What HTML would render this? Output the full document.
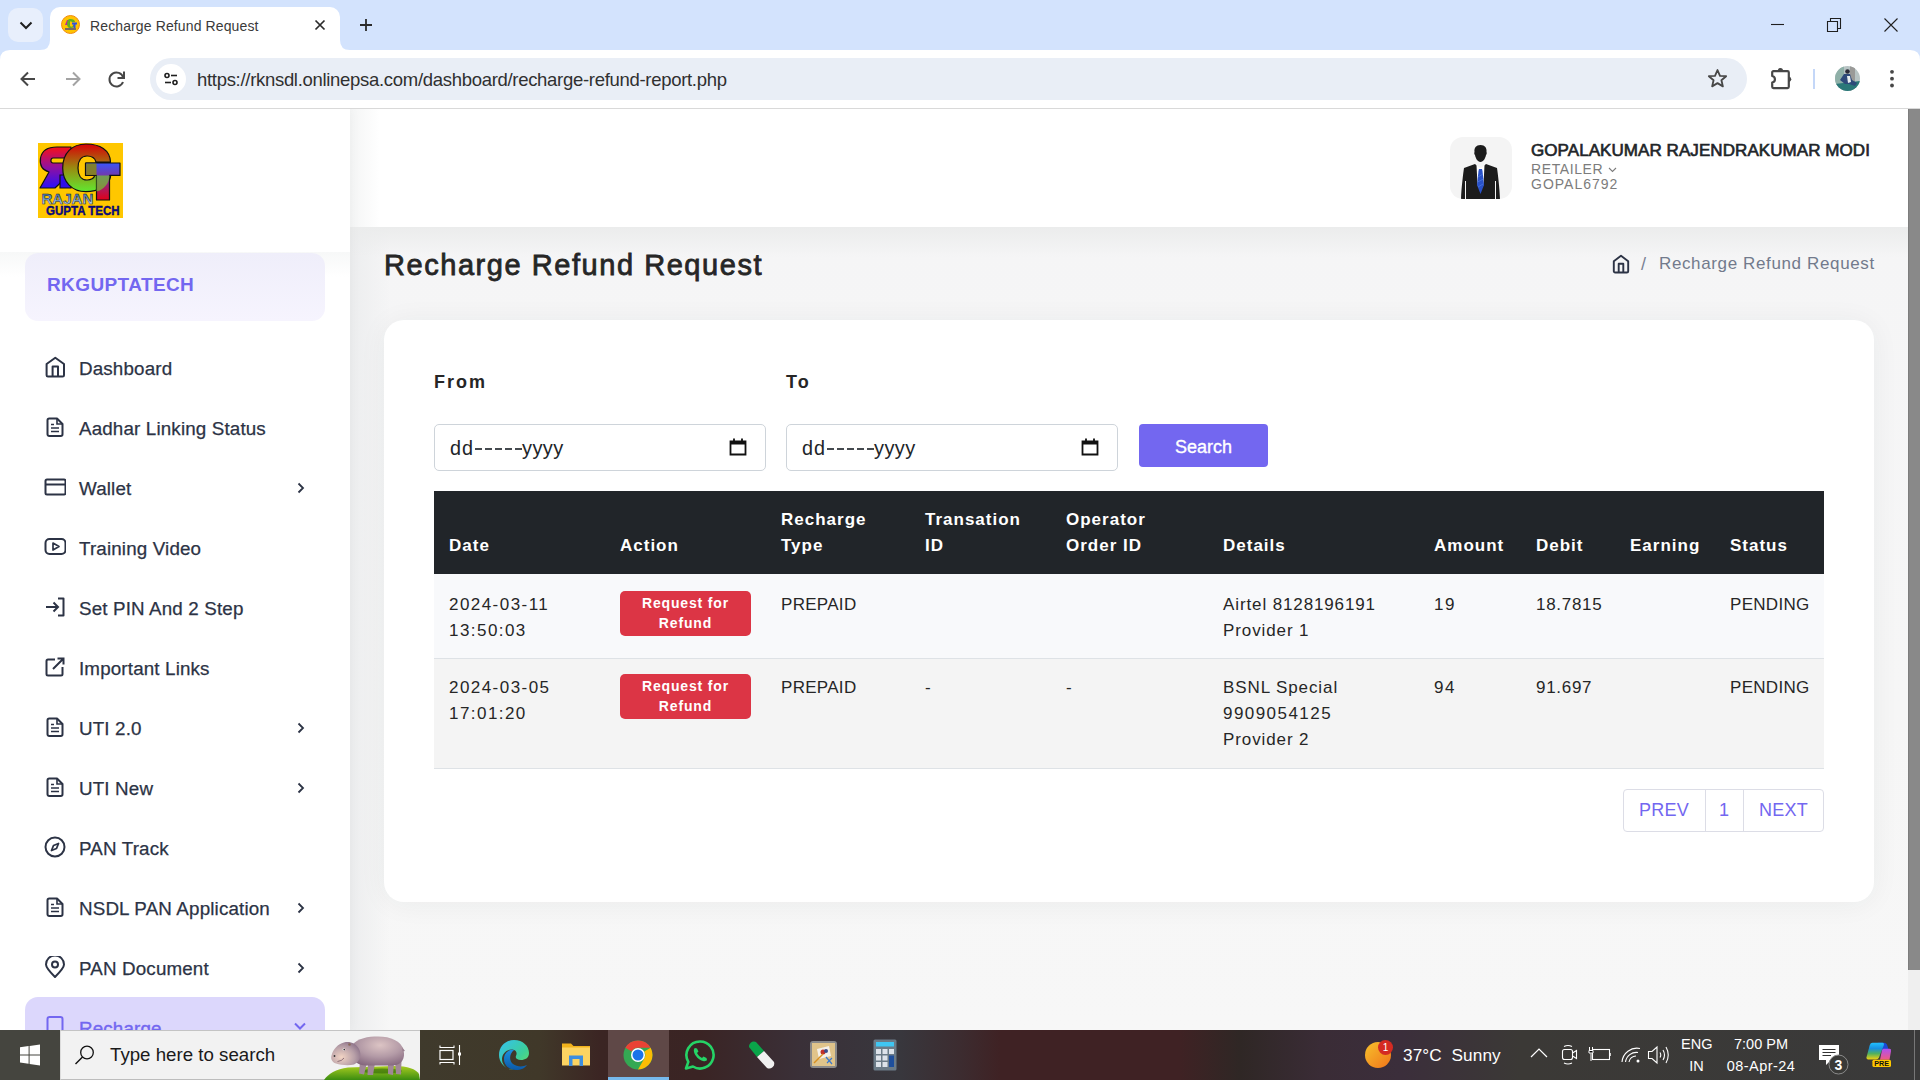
<!DOCTYPE html>
<html><head><meta charset="utf-8">
<style>
*{box-sizing:border-box;margin:0;padding:0}
html,body{width:1920px;height:1080px;overflow:hidden;font-family:"Liberation Sans",sans-serif;background:#fff;position:relative}
.abs{position:absolute}
/* chrome */
#tabstrip{left:0;top:0;width:1920px;height:50px;background:#d3e3fd}
#toolbar{left:0;top:50px;width:1920px;height:58px;background:#fff}
#sep{left:0;top:108px;width:1920px;height:1px;background:#d9d9d9}
/* page */
#page{left:0;top:109px;width:1908px;height:921px;background:#f5f5f5;overflow:hidden}
#scroll{left:1908px;top:109px;width:12px;height:921px;background:#efefef}
#thumb{left:1908px;top:109px;width:12px;height:861px;background:#898989;border-left:1px solid #7d7d7d}
#taskbar{left:0;top:1030px;width:1920px;height:50px;background:linear-gradient(90deg,#3e3d38 0px,#3f3a2c 420px,#403829 540px,#3b2523 600px,#3a2424 700px,#3a3038 800px,#38373d 900px,#3c2c30 960px,#3f2224 1000px,#3f2224 1180px,#2f2725 1240px,#3a2c36 1320px,#3b2e3b 1400px,#3b3936 1520px,#3a3a3a 1920px)}
.th{position:absolute;color:#fff;font-size:17px;font-weight:bold;line-height:26px;white-space:nowrap;letter-spacing:1px;margin-top:-2.5px}
.td{position:absolute;color:#262626;font-size:17px;line-height:26.3px;white-space:nowrap;letter-spacing:0.9px;margin-top:-2.5px}
.cap{letter-spacing:0.3px}
.dec{letter-spacing:0.7px}
.n{letter-spacing:1.45px}
.btn{position:absolute;width:131px;height:45px;background:#dc3545;border-radius:5px;color:#fff;font-size:14px;font-weight:bold;text-align:center;line-height:20px;padding-top:2px;letter-spacing:0.85px}
.inp{width:332px;height:47px;border:1px solid #ced4da;border-radius:5px;background:#fff}
.inp span{position:absolute;left:15px;top:12px;font-size:19.8px;color:#212529;line-height:22px;letter-spacing:1px}
.dsh{position:absolute;top:22.5px;width:7px;height:2px;background:#454a4f}
.yy{position:absolute;left:87px;top:12px;font-size:20px;font-weight:normal;color:#212529;line-height:22px;letter-spacing:0.4px}
.inp svg{position:absolute;left:293px;top:12px}
.pg{position:absolute;top:680px;height:43px;line-height:43px;text-align:center;color:#7367f0;font-size:18px;letter-spacing:0.2px}
.mi{position:absolute;left:79px;font-size:18.8px;color:#2c3345;-webkit-text-stroke:0.25px #2c3345;line-height:20px;white-space:nowrap;letter-spacing:0.15px}
</style></head>
<body>
<!-- TAB STRIP -->
<div id="tabstrip" class="abs">
  <div class="abs" style="left:8px;top:8px;width:35px;height:34px;background:#e8effc;border-radius:10px"></div>
  <svg class="abs" style="left:16px;top:17px" width="20" height="16" viewBox="0 0 20 16"><path d="M4.5 5.5 L10 11 L15.5 5.5" fill="none" stroke="#1f1f1f" stroke-width="2"/></svg>
  <!-- active tab -->
  <div class="abs" style="left:50px;top:7px;width:290px;height:43px;background:#fff;border-radius:10px 10px 0 0"></div>
  <svg class="abs" style="left:40px;top:40px" width10="10" width="10" height="10" viewBox="0 0 10 10"><path d="M0 10 Q10 10 10 0 L10 10 Z" fill="#fff"/></svg>
  <svg class="abs" style="left:340px;top:40px" width="10" height="10" viewBox="0 0 10 10"><path d="M0 0 Q0 10 10 10 L0 10 Z" fill="#fff"/></svg>
  <svg class="abs" style="left:61px;top:15px" width="19" height="19" viewBox="0 0 19 19"><circle cx="9.5" cy="9.5" r="9" fill="#ffc400" stroke="#f08a10" stroke-width="1"/><path d="M4 10 L6 5 L9 5 L9 8 L7 8 L8 10 Z" fill="#c020a0"/><path d="M9 4 C12 4 14 5 14 7 L11 7 C10 6 9 6 9 7 L9 11 C10 12 12 12 12 10 L14 10 C13 13 10 13 9 13 C7 13 6 11 6 9 C6 6 7 4 9 4 Z" fill="#60b020"/><path d="M11 7.5 H16 V9.5 H14.5 V13 H12.5 V9.5 H11 Z" fill="#3050e0"/><path d="M4 14 H15" stroke="#2030a0" stroke-width="1.2"/></svg>
  <div class="abs" style="left:90px;top:17px;font-size:14px;color:#3a3a3a;letter-spacing:0.12px;white-space:nowrap;line-height:18px">Recharge Refund Request</div>
  <svg class="abs" style="left:313px;top:18px" width="14" height="14" viewBox="0 0 14 14"><path d="M2.5 2.5 L11.5 11.5 M11.5 2.5 L2.5 11.5" stroke="#2b2b2b" stroke-width="1.7"/></svg>
  <svg class="abs" style="left:358px;top:17px" width="16" height="16" viewBox="0 0 16 16"><path d="M8 2 V14 M2 8 H14" stroke="#2b2b2b" stroke-width="1.8"/></svg>
  <!-- window controls -->
  <svg class="abs" style="left:1768px;top:14px" width="20" height="20" viewBox="0 0 20 20"><path d="M3 10.5 H16" stroke="#1f1f1f" stroke-width="1.1"/></svg>
  <svg class="abs" style="left:1824px;top:15px" width="20" height="20" viewBox="0 0 20 20"><path d="M3.5 6.5 H13.5 V16.5 H3.5 Z M6.5 6.5 V3.5 H16.5 V13.5 H13.5" fill="none" stroke="#1f1f1f" stroke-width="1.1"/></svg>
  <svg class="abs" style="left:1881px;top:15px" width="20" height="20" viewBox="0 0 20 20"><path d="M3.5 3.5 L16.5 16.5 M16.5 3.5 L3.5 16.5" stroke="#1f1f1f" stroke-width="1.1"/></svg>
</div>
<!-- TOOLBAR -->
<div id="toolbar" class="abs">
  <svg class="abs" style="left:1910px;top:0" width="10" height="10" viewBox="0 0 10 10"><path d="M0 0 H10 V10 Q10 0 0 0 Z" fill="#d3e3fd"/></svg>
  <svg class="abs" style="left:0;top:0" width="10" height="10" viewBox="0 0 10 10"><path d="M0 0 H10 Q0 0 0 10 Z" fill="#d3e3fd"/></svg>
  <svg class="abs" style="left:17px;top:18px" width="22" height="22" viewBox="0 0 22 22"><path d="M18 11 H5 M11 4.5 L4.5 11 L11 17.5" fill="none" stroke="#474747" stroke-width="2"/></svg>
  <svg class="abs" style="left:62px;top:18px" width="22" height="22" viewBox="0 0 22 22"><path d="M4 11 H17 M11 4.5 L17.5 11 L11 17.5" fill="none" stroke="#a3a3a3" stroke-width="2"/></svg>
  <svg class="abs" style="left:106px;top:18px" width="22" height="22" viewBox="0 0 22 22"><path d="M17.2 9.5 A7 7 0 1 0 17 14" fill="none" stroke="#474747" stroke-width="2"/><path d="M18 3.5 V10 H11.5" fill="none" stroke="#474747" stroke-width="2"/></svg>
  <div class="abs" style="left:150px;top:8px;width:1597px;height:42px;background:#e9eef6;border-radius:21px"></div>
  <div class="abs" style="left:156px;top:14px;width:30px;height:30px;background:#fff;border-radius:50%"></div>
  <svg class="abs" style="left:161px;top:19px" width="20" height="20" viewBox="0 0 20 20"><circle cx="6" cy="6.5" r="2" fill="none" stroke="#1f1f1f" stroke-width="1.6"/><path d="M10 6.5 H16" stroke="#1f1f1f" stroke-width="1.6"/><circle cx="14" cy="13.5" r="2" fill="none" stroke="#1f1f1f" stroke-width="1.6"/><path d="M4 13.5 H10" stroke="#1f1f1f" stroke-width="1.6"/></svg>
  <div class="abs" style="left:197px;top:20px;font-size:18.5px;letter-spacing:-0.3px;color:#303030;white-space:nowrap;line-height:20px">https://rknsdl.onlinepsa.com/dashboard/recharge-refund-report.php</div>
  <svg class="abs" style="left:1706px;top:17px" width="23" height="23" viewBox="0 0 24 24"><path d="M12 3.2 L14.6 9.2 L21 9.6 L16.1 13.8 L17.6 20.2 L12 16.8 L6.4 20.2 L7.9 13.8 L3 9.6 L9.4 9.2 Z" fill="none" stroke="#474747" stroke-width="1.9" stroke-linejoin="round"/></svg>
  <svg class="abs" style="left:1768px;top:16px" width="28" height="26" viewBox="0 0 28 26"><path d="M5 5.2 H19.5 A1.3 1.3 0 0 1 20.8 6.5 V20.8 A1.3 1.3 0 0 1 19.5 22.1 H5.5 A1.3 1.3 0 0 1 4.2 20.8 V16.5 A3.3 3.3 0 0 0 4.2 10 V6.5 A1.3 1.3 0 0 1 5 5.2 Z" fill="none" stroke="#474747" stroke-width="2.2" stroke-linejoin="round"/><path d="M9.8 4.5 A2.6 2.6 0 0 1 15 4.5 Z" fill="#474747"/><path d="M21 10.5 A2.8 2.8 0 0 1 21 16 Z" fill="#474747"/></svg>
  <div class="abs" style="left:1813px;top:19px;width:1.5px;height:20px;background:#c4d7f8"></div>
  <svg class="abs" style="left:1835px;top:16px" width="25" height="25" viewBox="0 0 25 25"><defs><clipPath id="avc"><circle cx="12.5" cy="12.5" r="12.5"/></clipPath></defs><g clip-path="url(#avc)"><rect width="25" height="25" fill="#b8c4c4"/><rect x="0" y="0" width="9" height="25" fill="#8fb0a8"/><rect x="15" y="0" width="5" height="25" fill="#9a9a98"/><path d="M0 18 L25 15 V25 H0 Z" fill="#2a7878"/><circle cx="12.5" cy="5.5" r="2.3" fill="#2a2a38"/><path d="M9 8 L15 8 L17 14 L22 17 L20 20 L14 18 L10 18 L5 14 Z" fill="#2e4a7a"/><path d="M12 10 L15 10 L16 16 L13 17 Z" fill="#e8f0f0"/></g></svg>
  <svg class="abs" style="left:1882px;top:16px" width="20" height="26" viewBox="0 0 20 26"><circle cx="10" cy="5.8" r="1.9" fill="#474747"/><circle cx="10" cy="12.7" r="1.9" fill="#474747"/><circle cx="10" cy="19.5" r="1.9" fill="#474747"/></svg>
</div>
<div id="sep" class="abs"></div>
<div id="page" class="abs">
  <!-- main bg shading -->
  <div class="abs" style="left:350px;top:118px;width:1558px;height:803px;background:linear-gradient(180deg,#f5f5f6 0%,#f6f6f6 60%,#f7f7f7 100%)"></div>
  <div class="abs" style="left:350px;top:118px;width:40px;height:803px;background:linear-gradient(90deg,#ecedee,rgba(246,246,246,0))"></div>
  <div class="abs" style="left:350px;top:118px;width:1558px;height:30px;background:linear-gradient(180deg,#ebecec,rgba(246,246,246,0))"></div>
  <!-- header -->
  <div class="abs" style="left:350px;top:0;width:1558px;height:118px;background:#fff"></div>
  <div class="abs" style="left:350px;top:0;width:30px;height:118px;background:linear-gradient(90deg,#f4f5f5,#fff)"></div>
  <!-- avatar -->
  <div class="abs" style="left:1450px;top:28px;width:62px;height:62px;border-radius:13px;background:#f4f4f4;overflow:hidden">
    <svg width="62" height="62" viewBox="0 0 62 62">
      <path d="M30.5 8 C26 8 24 11 24.5 15 C24 16 24.3 17.5 25 18 C25.5 21 27.5 25 30.5 25 C33.5 25 35.5 21 36 18 C36.7 17.5 37 16 36.5 15 C37 11 35 8 30.5 8 Z" fill="#1c1c1c"/>
      <path d="M25 27 L14 31 C13 38 11.5 50 11 62 L50 62 C49.5 50 48 38 47 31 L36 27 L30.5 32 Z" fill="#1c1c1c"/>
      <path d="M26.5 28 L30.5 31 L34.5 28 L33.5 48 L30.5 54 L27.5 48 Z" fill="#fff"/>
      <path d="M29 32 L32 32 L32.5 34 L34 48 L30.5 57 L27 48 L28.5 34 Z" fill="#2a52c9"/>
      <path d="M28 40 L33 37 M27.5 45 L33.5 42 M28 50 L33 47" stroke="#4a78e0" stroke-width="0.8"/>
      <path d="M15.5 44 V62 M45.5 44 V62" stroke="#f4f4f4" stroke-width="1"/>
    </svg>
  </div>
  <div class="abs" style="left:1531px;top:32px;font-size:17px;color:#212529;-webkit-text-stroke:0.65px #212529;white-space:nowrap;line-height:20px;letter-spacing:0.07px">GOPALAKUMAR RAJENDRAKUMAR MODI</div>
  <div class="abs" style="left:1531px;top:53px;font-size:14px;color:#7c7c7c;white-space:nowrap;line-height:15px;letter-spacing:0.6px">RETAILER <svg width="9" height="6" viewBox="0 0 9 6" style="vertical-align:1px"><path d="M1 1 L4.5 4.5 L8 1" fill="none" stroke="#7c7c7c" stroke-width="1.1"/></svg></div>
  <div class="abs" style="left:1531px;top:68px;font-size:14px;color:#7c7c7c;white-space:nowrap;line-height:15px;letter-spacing:1px">GOPAL6792</div>
  <!-- title & breadcrumb -->
  <div class="abs" style="left:384px;top:139px;font-size:29px;color:#262626;-webkit-text-stroke:0.8px #262626;white-space:nowrap;line-height:34px;letter-spacing:1.55px">Recharge Refund Request</div>
  <svg class="abs" style="left:1610px;top:145px" width="22" height="22" viewBox="0 0 22 22"><path d="M11 1.8 L18.2 7.2 V17.2 A1.3 1.3 0 0 1 16.9 18.5 H5.1 A1.3 1.3 0 0 1 3.8 17.2 V7.2 Z" fill="none" stroke="#2c3345" stroke-width="1.9" stroke-linejoin="round"/><path d="M8.7 18.5 V9.8 H13.3 V18.5" fill="none" stroke="#2c3345" stroke-width="1.9" stroke-linejoin="round"/></svg>
  <div class="abs" style="left:1641px;top:145px;font-size:18px;color:#7a8294;white-space:nowrap;line-height:20px">/</div>
  <div class="abs" style="left:1659px;top:145px;font-size:17px;color:#727a8c;white-space:nowrap;line-height:20px;letter-spacing:0.63px">Recharge Refund Request</div>
  <!-- card -->
  <div class="abs" style="left:384px;top:211px;width:1490px;height:582px;background:#fff;border-radius:20px;box-shadow:0 2px 28px rgba(40,50,60,0.055)"></div>
  <div class="abs" style="left:434px;top:263px;font-size:18px;font-weight:bold;color:#262626;line-height:20px;letter-spacing:2px">From</div>
  <div class="abs" style="left:786px;top:263px;font-size:18px;font-weight:bold;color:#262626;line-height:20px;letter-spacing:2px">To</div>
  <div class="abs inp" style="left:434px;top:315px"><span>dd</span><i class="dsh" style="left:40px"></i><i class="dsh" style="left:50px"></i><i class="dsh" style="left:60px"></i><i class="dsh" style="left:70px"></i><i class="dsh" style="left:80px"></i><b class="yy">yyyy</b><svg width="20" height="20" viewBox="0 0 20 20"><path d="M2.5 4.5 H17.5 V17.5 H2.5 Z" fill="none" stroke="#111" stroke-width="1.8"/><path d="M2.5 4 H17.5 V7.5 H2.5 Z" fill="#111"/><path d="M6 1.5 V4.5 M14 1.5 V4.5" stroke="#111" stroke-width="1.8"/></svg></div>
  <div class="abs inp" style="left:786px;top:315px"><span>dd</span><i class="dsh" style="left:40px"></i><i class="dsh" style="left:50px"></i><i class="dsh" style="left:60px"></i><i class="dsh" style="left:70px"></i><i class="dsh" style="left:80px"></i><b class="yy">yyyy</b><svg width="20" height="20" viewBox="0 0 20 20"><path d="M2.5 4.5 H17.5 V17.5 H2.5 Z" fill="none" stroke="#111" stroke-width="1.8"/><path d="M2.5 4 H17.5 V7.5 H2.5 Z" fill="#111"/><path d="M6 1.5 V4.5 M14 1.5 V4.5" stroke="#111" stroke-width="1.8"/></svg></div>
  <div class="abs" style="left:1139px;top:315px;width:129px;height:43px;background:#7367f0;border-radius:4px;color:#fff;font-size:18px;text-align:center;line-height:47px;-webkit-text-stroke:0.35px #fff">Search</div>
  <!-- table -->
  <div class="abs" style="left:434px;top:382px;width:1390px;height:83px;background:#212529"></div>
  <div class="abs" style="left:434px;top:465px;width:1390px;height:84px;background:#f8f9fb"></div>
  <div class="abs" style="left:434px;top:549px;width:1390px;height:1px;background:#dee2e6"></div>
  <div class="abs" style="left:434px;top:550px;width:1390px;height:109px;background:#f4f4f4"></div>
  <div class="abs" style="left:434px;top:659px;width:1390px;height:1px;background:#dee2e6"></div>
  <div class="th" style="left:449px;top:426px">Date</div>
  <div class="th" style="left:620px;top:426px">Action</div>
  <div class="th" style="left:781px;top:400px">Recharge<br>Type</div>
  <div class="th" style="left:925px;top:400px">Transation<br>ID</div>
  <div class="th" style="left:1066px;top:400px">Operator<br>Order ID</div>
  <div class="th" style="left:1223px;top:426px">Details</div>
  <div class="th" style="left:1434px;top:426px">Amount</div>
  <div class="th" style="left:1536px;top:426px">Debit</div>
  <div class="th" style="left:1630px;top:426px">Earning</div>
  <div class="th" style="left:1730px;top:426px">Status</div>
  <!-- row 1 -->
  <div class="td" style="left:449px;top:485px"><span class="n">2024-03-11</span><br><span class="n">13:50:03</span></div>
  <div class="btn" style="left:620px;top:482px">Request for<br>Refund</div>
  <div class="td cap" style="left:781px;top:485px">PREPAID</div>
  <div class="td" style="left:1223px;top:485px">Airtel <span class="n" style="letter-spacing:0.85px">8128196191</span><br>Provider 1</div>
  <div class="td" style="left:1434px;top:485px"><span class="n">19</span></div>
  <div class="td" style="left:1536px;top:485px"><span class="dec">18.7815</span></div>
  <div class="td cap" style="left:1730px;top:485px">PENDING</div>
  <!-- row 2 -->
  <div class="td" style="left:449px;top:568px"><span class="n">2024-03-05</span><br><span class="n">17:01:20</span></div>
  <div class="btn" style="left:620px;top:565px">Request for<br>Refund</div>
  <div class="td cap" style="left:781px;top:568px">PREPAID</div>
  <div class="td" style="left:925px;top:568px">-</div>
  <div class="td" style="left:1066px;top:568px">-</div>
  <div class="td" style="left:1223px;top:568px">BSNL Special<br><span class="n">9909054125</span><br>Provider 2</div>
  <div class="td" style="left:1434px;top:568px"><span class="n">94</span></div>
  <div class="td" style="left:1536px;top:568px"><span class="dec">91.697</span></div>
  <div class="td cap" style="left:1730px;top:568px">PENDING</div>
  <!-- pagination -->
  <div class="abs" style="left:1623px;top:680px;width:201px;height:43px;border:1px solid #dcdde6;border-radius:4px;background:#fff"></div>
  <div class="abs" style="left:1705px;top:680px;width:1px;height:43px;background:#dcdde6"></div>
  <div class="abs" style="left:1743px;top:680px;width:1px;height:43px;background:#dcdde6"></div>
  <div class="pg" style="left:1623px;width:82px">PREV</div>
  <div class="pg" style="left:1705px;width:38px">1</div>
  <div class="pg" style="left:1743px;width:81px">NEXT</div>
  <!-- SIDEBAR -->
  <div class="abs" style="left:0;top:0;width:350px;height:921px;background:#fff;box-shadow:0 0 12px rgba(0,0,0,0.04)"></div>
  <div class="abs" style="left:0;top:143px;width:350px;height:25px;background:linear-gradient(180deg,#f7f8f8,#fff)"></div>
  <svg class="abs" style="left:38px;top:34px" width="85" height="75" viewBox="0 0 85 75">
    <defs>
      <linearGradient id="gR" x1="0" y1="0" x2="0" y2="1"><stop offset="0" stop-color="#f5101a"/><stop offset="0.5" stop-color="#9010a0"/><stop offset="1" stop-color="#2a10f8"/></linearGradient>
      <linearGradient id="gG" x1="0" y1="0" x2="0" y2="1"><stop offset="0" stop-color="#d80008"/><stop offset="0.5" stop-color="#9a8a10"/><stop offset="1" stop-color="#60e830"/></linearGradient>
      <linearGradient id="gT" x1="0" y1="0" x2="0" y2="1"><stop offset="0" stop-color="#3a55f8"/><stop offset="1" stop-color="#e00018"/></linearGradient>
      <linearGradient id="gJ" x1="0" y1="0" x2="0" y2="1"><stop offset="0" stop-color="#2a5a98"/><stop offset="0.6" stop-color="#8ab8e0"/><stop offset="1" stop-color="#f0f8ff"/></linearGradient>
    </defs>
    <rect width="85" height="75" fill="#ffc700"/>
    <path d="M2 45 L11 29 C4 27 1.5 22 2.5 15 C4 7 11 4 19 4 L33 4 L33 15 L15 15 C12.5 15 12 20 15 20 L26 20 L33 30 L17 45 Z" fill="url(#gR)" stroke="#111" stroke-width="1.2" stroke-linejoin="round"/>
    <path d="M22 32 L33 32 L33 45 L22 45 Z" fill="#3010e8" stroke="#111" stroke-width="1.2"/>
    <path d="M48 1 C62 1 72 7 72.5 19 L58 19 C57 15 53 13 49 13 C43 13 40 18 40 25 C40 32 43 37 49 37 C53 37 56 35 57 32 L48 32 L48 20 L72.5 20 L72.5 34 C70 44 60 48.6 48 48.6 C34 48.6 24.7 39 24.7 25 C24.7 10 34 1 48 1 Z" fill="url(#gG)" stroke="#111" stroke-width="1.2" stroke-linejoin="round"/>
    <path d="M47.5 20 L82 20 L82 32.4 L71.5 32.4 L71.5 57 L58.5 57 L58.5 32.4 L47.5 32.4 Z" fill="url(#gT)" stroke="#111" stroke-width="1.2" stroke-linejoin="round"/>
    <path d="M48.2 20.6 L58.5 20.6 L58.5 32 L48.2 32 Z" fill="#8a8a10" opacity="0.85"/>
    <path d="M58.5 32.4 L71.5 32.4 L71.5 34 C70 44 62 48 58.5 48.4 Z" fill="#70c830" opacity="0.7"/>
    <text x="3.4" y="61" font-family="Liberation Sans" font-weight="bold" font-size="14" fill="url(#gJ)" stroke="#1a2030" stroke-width="0.5" textLength="52" lengthAdjust="spacingAndGlyphs">RAJAN</text>
    <text x="8" y="72.2" font-family="Liberation Sans" font-weight="bold" font-size="12" fill="#0a0a90" stroke="#000040" stroke-width="0.35" textLength="73.7" lengthAdjust="spacingAndGlyphs">GUPTA TECH</text>
  </svg>
  <div class="abs" style="left:25px;top:144px;width:300px;height:68px;border-radius:13px;background:linear-gradient(180deg,#efeefa,#f6f4fe)"></div>
  <div class="abs" style="left:47px;top:165px;font-size:19px;font-weight:bold;color:#7367f0;line-height:22px;letter-spacing:0.4px">RKGUPTATECH</div>
  <!--MENU-->
  <svg class="abs" style="left:44px;top:247px" width="22" height="22" viewBox="0 0 22 22"><path d="M11.3 1.8 L20 8 V19.2 A1.4 1.4 0 0 1 18.6 20.6 H4 A1.4 1.4 0 0 1 2.6 19.2 V8 Z" fill="none" stroke="#2c3345" stroke-width="2" stroke-linejoin="round"/><path d="M8.6 20.6 V10.5 H14 V20.6" fill="none" stroke="#2c3345" stroke-width="2" stroke-linejoin="round"/></svg>
  <div class="mi" style="top:250px">Dashboard</div>
  <svg class="abs" style="left:44px;top:307px" width="22" height="22" viewBox="0 0 22 22"><path d="M5.2 2.5 H13 L18.5 8 V18.3 A1.7 1.7 0 0 1 16.8 20 H5.2 A1.7 1.7 0 0 1 3.5 18.3 V4.2 A1.7 1.7 0 0 1 5.2 2.5 Z" fill="none" stroke="#2c3345" stroke-width="2" stroke-linejoin="round"/><path d="M13 2.5 V8 H18.5" fill="none" stroke="#2c3345" stroke-width="1.6"/><path d="M7 8.5 H10 M7 12 H15 M7 15.5 H15" stroke="#2c3345" stroke-width="1.7"/></svg>
  <div class="mi" style="top:310px">Aadhar Linking Status</div>
  <svg class="abs" style="left:44px;top:367px" width="22" height="22" viewBox="0 0 22 22"><rect x="1.5" y="3.5" width="20" height="15" rx="1.5" fill="none" stroke="#2c3345" stroke-width="2"/><path d="M1.5 8.5 H21.5" stroke="#2c3345" stroke-width="2"/></svg>
  <div class="mi" style="top:370px">Wallet</div>
  <svg class="abs" style="left:294px;top:371px" width="14" height="16" viewBox="0 0 14 16"><path d="M4.5 3.5 L9 8 L4.5 12.5" fill="none" stroke="#2c3345" stroke-width="1.8"/></svg>
  <svg class="abs" style="left:44px;top:427px" width="22" height="22" viewBox="0 0 22 22"><rect x="1.5" y="3" width="20" height="15" rx="4" fill="none" stroke="#2c3345" stroke-width="2"/><path d="M9 7 L15 10.5 L9 14 Z" fill="none" stroke="#2c3345" stroke-width="1.7" stroke-linejoin="round"/></svg>
  <div class="mi" style="top:430px">Training Video</div>
  <svg class="abs" style="left:44px;top:487px" width="22" height="22" viewBox="0 0 22 22"><path d="M14 2.5 H19.5 V19.5 H14" fill="none" stroke="#2c3345" stroke-width="2" stroke-linejoin="round"/><path d="M2 11 H14 M9.5 6.5 L14 11 L9.5 15.5" fill="none" stroke="#2c3345" stroke-width="2"/></svg>
  <div class="mi" style="top:490px">Set PIN And 2 Step</div>
  <svg class="abs" style="left:44px;top:547px" width="22" height="22" viewBox="0 0 22 22"><path d="M11 3.5 H4 A1.5 1.5 0 0 0 2.5 5 V18 A1.5 1.5 0 0 0 4 19.5 H17 A1.5 1.5 0 0 0 18.5 18 V11" fill="none" stroke="#2c3345" stroke-width="2"/><path d="M9 13 L19.5 2.5 M13.5 2.5 H19.5 V8.5" fill="none" stroke="#2c3345" stroke-width="2"/></svg>
  <div class="mi" style="top:550px">Important Links</div>
  <svg class="abs" style="left:44px;top:607px" width="22" height="22" viewBox="0 0 22 22"><path d="M5.2 2.5 H13 L18.5 8 V18.3 A1.7 1.7 0 0 1 16.8 20 H5.2 A1.7 1.7 0 0 1 3.5 18.3 V4.2 A1.7 1.7 0 0 1 5.2 2.5 Z" fill="none" stroke="#2c3345" stroke-width="2" stroke-linejoin="round"/><path d="M13 2.5 V8 H18.5" fill="none" stroke="#2c3345" stroke-width="1.6"/><path d="M7 8.5 H10 M7 12 H15 M7 15.5 H15" stroke="#2c3345" stroke-width="1.7"/></svg>
  <div class="mi" style="top:610px">UTI 2.0</div>
  <svg class="abs" style="left:294px;top:611px" width="14" height="16" viewBox="0 0 14 16"><path d="M4.5 3.5 L9 8 L4.5 12.5" fill="none" stroke="#2c3345" stroke-width="1.8"/></svg>
  <svg class="abs" style="left:44px;top:667px" width="22" height="22" viewBox="0 0 22 22"><path d="M5.2 2.5 H13 L18.5 8 V18.3 A1.7 1.7 0 0 1 16.8 20 H5.2 A1.7 1.7 0 0 1 3.5 18.3 V4.2 A1.7 1.7 0 0 1 5.2 2.5 Z" fill="none" stroke="#2c3345" stroke-width="2" stroke-linejoin="round"/><path d="M13 2.5 V8 H18.5" fill="none" stroke="#2c3345" stroke-width="1.6"/><path d="M7 8.5 H10 M7 12 H15 M7 15.5 H15" stroke="#2c3345" stroke-width="1.7"/></svg>
  <div class="mi" style="top:670px">UTI New</div>
  <svg class="abs" style="left:294px;top:671px" width="14" height="16" viewBox="0 0 14 16"><path d="M4.5 3.5 L9 8 L4.5 12.5" fill="none" stroke="#2c3345" stroke-width="1.8"/></svg>
  <svg class="abs" style="left:44px;top:727px" width="22" height="22" viewBox="0 0 22 22"><circle cx="11" cy="11" r="9.5" fill="none" stroke="#2c3345" stroke-width="2"/><path d="M14.5 7.5 L12.5 12.5 L7.5 14.5 L9.5 9.5 Z" fill="none" stroke="#2c3345" stroke-width="1.8" stroke-linejoin="round"/></svg>
  <div class="mi" style="top:730px">PAN Track</div>
  <svg class="abs" style="left:44px;top:787px" width="22" height="22" viewBox="0 0 22 22"><path d="M5.2 2.5 H13 L18.5 8 V18.3 A1.7 1.7 0 0 1 16.8 20 H5.2 A1.7 1.7 0 0 1 3.5 18.3 V4.2 A1.7 1.7 0 0 1 5.2 2.5 Z" fill="none" stroke="#2c3345" stroke-width="2" stroke-linejoin="round"/><path d="M13 2.5 V8 H18.5" fill="none" stroke="#2c3345" stroke-width="1.6"/><path d="M7 8.5 H10 M7 12 H15 M7 15.5 H15" stroke="#2c3345" stroke-width="1.7"/></svg>
  <div class="mi" style="top:790px">NSDL PAN Application</div>
  <svg class="abs" style="left:294px;top:791px" width="14" height="16" viewBox="0 0 14 16"><path d="M4.5 3.5 L9 8 L4.5 12.5" fill="none" stroke="#2c3345" stroke-width="1.8"/></svg>
  <svg class="abs" style="left:44px;top:847px" width="22" height="22" viewBox="0 0 22 22"><path d="M11 21 C6 16 2 12 2 8.5 A9 9 0 0 1 20 8.5 C20 12 16 16 11 21 Z" fill="none" stroke="#2c3345" stroke-width="2" stroke-linejoin="round"/><circle cx="11" cy="8.5" r="3" fill="none" stroke="#2c3345" stroke-width="2"/></svg>
  <div class="mi" style="top:850px">PAN Document</div>
  <svg class="abs" style="left:294px;top:851px" width="14" height="16" viewBox="0 0 14 16"><path d="M4.5 3.5 L9 8 L4.5 12.5" fill="none" stroke="#2c3345" stroke-width="1.8"/></svg>
  <div class="abs" style="left:25px;top:888px;width:300px;height:60px;border-radius:13px;background:#dcd7fc"></div>
  <svg class="abs" style="left:44px;top:905px" width="22" height="22" viewBox="0 0 22 22"><rect x="3.5" y="3" width="15" height="17" rx="2" fill="none" stroke="#7367f0" stroke-width="2"/></svg>
  <div class="mi" style="top:910px;color:#7367f0;-webkit-text-stroke:0.4px #7367f0">Recharge</div>
  <svg class="abs" style="left:292px;top:910px" width="16" height="14" viewBox="0 0 16 14"><path d="M3 4.5 L8 9.5 L13 4.5" fill="none" stroke="#7367f0" stroke-width="2"/></svg>
  <!--/MENU-->
</div>
<div id="scroll" class="abs"></div>
<div id="thumb" class="abs"></div>
<div id="taskbar" class="abs">
  <div class="abs" style="left:0;top:0;width:60px;height:50px;background:#45453f"></div>
  <svg class="abs" style="left:19px;top:14px" width="22" height="22" viewBox="0 0 22 22"><path d="M1 3.3 L9.6 2.1 V10.4 H1 Z M10.6 2 L21 0.5 V10.4 H10.6 Z M1 11.4 H9.6 V19.8 L1 18.6 Z M10.6 11.4 H21 V21.4 L10.6 19.9 Z" fill="#fff"/></svg>
  <div class="abs" style="left:60px;top:0;width:360px;height:50px;background:#f2f2f2;border-top:1px solid #c4c4c4;border-bottom:1px solid #bdbdbd;border-left:1px solid #dcdcdc"></div>
  <svg class="abs" style="left:74px;top:14px" width="22" height="22" viewBox="0 0 22 22"><circle cx="13" cy="8.5" r="6.3" fill="none" stroke="#111" stroke-width="1.3"/><path d="M8.5 13 L1.5 20" stroke="#111" stroke-width="1.4"/></svg>
  <div class="abs" style="left:110px;top:13px;font-size:18.7px;color:#1a1a1a;white-space:nowrap;line-height:24px">Type here to search</div>
  <!-- hippo -->
  <svg class="abs" style="left:322px;top:4px" width="98" height="46" viewBox="0 0 98 46">
    <defs>
      <radialGradient id="hb" cx="0.55" cy="0.3" r="0.8"><stop offset="0" stop-color="#dcc4c4"/><stop offset="0.5" stop-color="#b39aa6"/><stop offset="1" stop-color="#7e6078"/></radialGradient>
      <radialGradient id="hh" cx="0.35" cy="0.65" r="0.75"><stop offset="0" stop-color="#f2d4c4"/><stop offset="0.6" stop-color="#b8a0a8"/><stop offset="1" stop-color="#8a7088"/></radialGradient>
      <linearGradient id="gr" x1="0" y1="0" x2="0" y2="1"><stop offset="0" stop-color="#a8cc20"/><stop offset="1" stop-color="#3a8c10"/></linearGradient>
    </defs>
    <path d="M2 46 C6 40 14 35 26 33.5 L72 32 C86 32 94 35 97 40 L98 46 Z" fill="url(#gr)"/>
    <ellipse cx="60" cy="37" rx="20" ry="2.5" fill="#2a6008" opacity="0.55"/>
    <path d="M38 27 L37 39.5 L42 40.5 L45 29 Z M46 28 L45.5 41 L51 41 L53 29 Z M66 28 L66 40 L71 41 L72 29 Z M73 26 L74 40 L79 40.5 L79.5 27 Z" fill="#a08896"/>
    <path d="M30 11 C36 4 46 2.5 56 2.5 C69 2.5 79 7 81.5 16 C83.5 24 80 31 71 31.5 L44 31.5 C36 31.5 31 27 29 21 Z" fill="url(#hb)"/>
    <path d="M80 13 L83 17 L80.5 17.5 Z" fill="#9a8090"/>
    <path d="M22 8.5 C28 7 34 9.5 37 15 C40 21 38 28 32 30.5 C26 32 19 31 14 29.5 C10 28.3 8.5 25 9.5 21.5 C11 15 16 10 22 8.5 Z" fill="url(#hh)"/>
    <circle cx="12.5" cy="22" r="0.9" fill="#333"/>
    <ellipse cx="22" cy="15.5" rx="1.4" ry="1.1" fill="#fff"/><circle cx="22.2" cy="15.6" r="0.8" fill="#222"/>
    <circle cx="27.5" cy="10.5" r="1.3" fill="#8a6a5a"/>
    <path d="M15.5 27.5 Q20 27 22 24" fill="none" stroke="#6a4a5a" stroke-width="0.7"/>
  </svg>
  <!-- task view -->
  <svg class="abs" style="left:438px;top:14px" width="24" height="22" viewBox="0 0 24 22"><path d="M2 1.5 V3.5 H16 V1.5 M2 20.5 V18.5 H16 V20.5" fill="none" stroke="#fff" stroke-width="1.1"/><rect x="2" y="6.5" width="13" height="9" fill="none" stroke="#fff" stroke-width="1.2"/><path d="M21.5 1 V21" stroke="#fff" stroke-width="1.1"/><rect x="20" y="8.5" width="3" height="3" fill="#fff"/></svg>
  <!-- edge -->
  <svg class="abs" style="left:498px;top:9px" width="32" height="32" viewBox="0 0 32 32">
    <defs><linearGradient id="eg1" x1="0" y1="0" x2="1" y2="1"><stop offset="0" stop-color="#35c1f1"/><stop offset="0.6" stop-color="#3ccf9a"/><stop offset="1" stop-color="#6fe05a"/></linearGradient>
    <linearGradient id="eg2" x1="0" y1="0" x2="0" y2="1"><stop offset="0" stop-color="#1a8fe0"/><stop offset="1" stop-color="#0c59a8"/></linearGradient></defs>
    <path d="M16 1 C25 1 31 7 31 14 C31 19 27 21 23 21 C19 21 17 19 18 17 C19 15 19 12 16 11 C10 9 4 14 4 20 C4 27 10 31 16 31 C8 31 1 24 1 16 C1 7 8 1 16 1 Z" fill="url(#eg1)"/>
    <path d="M16 11 C11 10 6 14 6 20 C6 27 12 31 18 31 C23 31 27 29 29 26 C25 28 19 28 15 25 C11 22 11 15 16 11 Z" fill="url(#eg2)"/>
  </svg>
  <!-- folder -->
  <svg class="abs" style="left:561px;top:12px" width="30" height="26" viewBox="0 0 30 26"><path d="M1 1.5 H10 L12.5 4 H29 V23 H1 Z" fill="#f1b21c"/><path d="M1 5.5 H29 V23.5 H1 Z" fill="#fcd462"/><path d="M8 24 V13.5 H22 V24 H18.5 V17 H11.5 V24 Z" fill="#3d8ee0"/></svg>
  <!-- chrome active -->
  <div class="abs" style="left:608px;top:0;width:61px;height:47px;background:#5f4847"></div>
  <div class="abs" style="left:608px;top:47px;width:61px;height:3px;background:#76b9ed"></div>
  <svg class="abs" style="left:623px;top:10px" width="30" height="30" viewBox="0 0 30 30">
    <circle cx="15" cy="15" r="14.5" fill="#34a853"/>
    <path d="M15 0.5 A14.5 14.5 0 0 1 27.6 7.8 L15 7.8 A7.2 7.2 0 0 0 8.7 11.4 L2.4 7.8 A14.5 14.5 0 0 1 15 0.5 Z" fill="#ea4335"/>
    <path d="M27.6 7.8 A14.5 14.5 0 0 1 15 29.5 L21.3 18.6 A7.2 7.2 0 0 0 21.3 11.4 Z" fill="#fbbc04"/>
    <circle cx="15" cy="15" r="7" fill="#fff"/><circle cx="15" cy="15" r="5.5" fill="#1a73e8"/>
  </svg>
  <!-- whatsapp -->
  <svg class="abs" style="left:684px;top:9px" width="32" height="32" viewBox="0 0 32 32"><path d="M16 2.5 A13.5 13.5 0 1 1 9 27.5 L2 29.5 L4.3 22.8 A13.5 13.5 0 0 1 16 2.5 Z" fill="none" stroke="#25d366" stroke-width="2.6" stroke-linejoin="round"/><path d="M11 9 C10 9.5 9.5 11 10 13 C11 17 15 21 19 22 C21 22.5 22.5 22 23 21 L22.5 19 L19.5 17.5 L18 19 C16 18 14 16 13 14 L14.5 12.5 L13 9.5 Z" fill="#25d366"/></svg>
  <!-- pill -->
  <svg class="abs" style="left:746px;top:10px" width="31" height="30" viewBox="0 0 31 30"><path d="M3 7 A5 5 0 0 1 10 2 L18 11 L11 17 Z" fill="#0aa54a"/><path d="M11 17 L18 11 L28 22 A5 5 0 0 1 21 28 Z" fill="#f0f0f0"/></svg>
  <!-- photo app -->
  <div class="abs" style="left:810px;top:11px;width:27px;height:27px;border-radius:3px;background:#8a8a8a;"></div>
  <div class="abs" style="left:812px;top:13px;width:23px;height:23px;background:#e0c48a"></div>
  <svg class="abs" style="left:812px;top:13px" width="23" height="23" viewBox="0 0 23 23"><path d="M5 6 L17 3 L19 13 L7 16 Z" fill="#f4f0e8"/><circle cx="11" cy="9" r="2.5" fill="#c0302a"/><circle cx="14" cy="8" r="2" fill="#3a4a8a"/><path d="M2 20 L11 11" stroke="#d89020" stroke-width="1.5"/><path d="M14 14 L20 21 M20 15 L15 20" stroke="#3a7ad0" stroke-width="1.2"/></svg>
  <!-- calculator -->
  <svg class="abs" style="left:873px;top:9px" width="24" height="32" viewBox="0 0 24 32"><rect x="0.5" y="0.5" width="23" height="31" rx="1.5" fill="#6b7b87"/><rect x="3" y="3" width="18" height="4.5" fill="#3fc6f2"/><g fill="#dde3ea"><rect x="3" y="10" width="5" height="5"/><rect x="9.5" y="10" width="5" height="5"/><rect x="16" y="10" width="5" height="5"/><rect x="3" y="16.5" width="5" height="5"/><rect x="9.5" y="16.5" width="5" height="5"/><rect x="3" y="23" width="5" height="5"/><rect x="9.5" y="23" width="5" height="5"/></g><rect x="16" y="16.5" width="5" height="11.5" fill="#1e4f9c"/></svg>
  <!-- tray -->
  <div class="abs" style="left:1365px;top:12px;width:26px;height:26px;border-radius:50%;background:linear-gradient(135deg,#f7c12c,#f0741a)"></div>
  <div class="abs" style="left:1378px;top:10px;width:15px;height:15px;border-radius:50%;background:#d42b22;color:#fff;font-size:10px;line-height:15px;text-align:center">1</div>
  <div class="abs" style="left:1403px;top:13px;font-size:17.2px;color:#fff;white-space:nowrap;line-height:24px;letter-spacing:0.1px">37°C&nbsp; Sunny</div>
  <svg class="abs" style="left:1529px;top:16px" width="20" height="14" viewBox="0 0 20 14"><path d="M2 11 L10 3 L18 11" fill="none" stroke="#fff" stroke-width="1.2"/></svg>
  <svg class="abs" style="left:1561px;top:14px" width="18" height="22" viewBox="0 0 18 22"><rect x="1.5" y="5.5" width="10" height="10" rx="2" fill="none" stroke="#fff" stroke-width="1.1"/><path d="M11.5 9 L15.5 6.5 V14.5 L11.5 12" fill="none" stroke="#fff" stroke-width="1.1"/><path d="M3 2.5 Q7 0.5 11 2.5 M3 19 Q7 21 11 19" fill="none" stroke="#fff" stroke-width="1.1"/></svg>
  <svg class="abs" style="left:1588px;top:16px" width="24" height="16" viewBox="0 0 24 16"><rect x="4.5" y="3.5" width="17" height="10" fill="none" stroke="#fff" stroke-width="1.1"/><path d="M22 7 V10" stroke="#fff" stroke-width="1.5"/><path d="M1.5 1 V4 M4.5 1 V4 M1 4.5 H5 V7 H1 Z M3 7.5 V15" stroke="#fff" stroke-width="1"/></svg>
  <svg class="abs" style="left:1620px;top:16px" width="22" height="18" viewBox="0 0 22 18"><path d="M2 16 A15 15 0 0 1 20 2.5 M5.5 16 A11 11 0 0 1 18 6.5 M9 16 A7 7 0 0 1 16 10" fill="none" stroke="#fff" stroke-width="1.1"/><circle cx="18" cy="15" r="1.5" fill="#fff"/></svg>
  <svg class="abs" style="left:1647px;top:14px" width="24" height="22" viewBox="0 0 24 22"><path d="M1.5 7.5 H5 L10 3 V19 L5 14.5 H1.5 Z" fill="none" stroke="#fff" stroke-width="1.1"/><path d="M13 8.5 Q14.5 11 13 13.5 M16 6 Q19 11 16 16 M19 3 Q23.5 11 19 19" fill="none" stroke="#fff" stroke-width="1.1"/></svg>
  <div class="abs" style="left:1681px;top:3px;width:31px;font-size:14.5px;color:#fff;line-height:22px;text-align:center">ENG<br>IN</div>
  <div class="abs" style="left:1720px;top:3px;width:82px;font-size:14.5px;color:#fff;line-height:22px;text-align:center">7:00 PM<br><span style="letter-spacing:0.45px">08-Apr-24</span></div>
  <svg class="abs" style="left:1817px;top:12px" width="34" height="36" viewBox="0 0 34 36"><path d="M2 3 H22 V18 H14 L9 23 V18 H2 Z" fill="#fff"/><path d="M5.5 7.5 H18.5 M5.5 10.5 H18.5 M5.5 13.5 H14" stroke="#333" stroke-width="1.2"/><circle cx="21.5" cy="22.5" r="9.5" fill="#3a3a38" stroke="#8a8a8a" stroke-width="1"/><text x="21.5" y="27.5" font-family="Liberation Sans" font-weight="bold" font-size="14" fill="#fff" text-anchor="middle">3</text></svg>
  <svg class="abs" style="left:1865px;top:12px" width="28" height="26" viewBox="0 0 28 26"><defs><linearGradient id="cpl" x1="0" y1="0" x2="0" y2="1"><stop offset="0" stop-color="#20c0ff"/><stop offset="0.35" stop-color="#1890e0"/><stop offset="0.65" stop-color="#50b060"/><stop offset="1" stop-color="#f0d010"/></linearGradient><linearGradient id="cpr" x1="0" y1="0" x2="0" y2="1"><stop offset="0" stop-color="#b050f0"/><stop offset="1" stop-color="#f05a80"/></linearGradient></defs><path d="M13 0.7 H19 Q21.5 0.7 22.5 4 L23.5 7.5 H15.5 Z" fill="#1a48d8"/><path d="M7.5 0.7 H17.5 Q19.5 0.7 18.8 3.2 L14 15.5 Q13.2 17.4 11 17.4 H3.2 Q1.2 17.4 1.5 15.2 L4.8 3 Q5.5 0.7 7.5 0.7 Z" fill="url(#cpl)"/><path d="M18.5 6.8 H24.5 Q26.5 6.8 26 9.2 L24.5 17.8 H15 L16.8 9 Q17.3 6.8 18.5 6.8 Z" fill="url(#cpr)"/><rect x="7.4" y="17.7" width="18.6" height="7.3" rx="1.6" fill="#ffc800"/><text x="16.7" y="24.3" font-family="Liberation Sans" font-weight="bold" font-size="7.2" fill="#111" text-anchor="middle">PRE</text></svg>
  <div class="abs" style="left:1914px;top:0;width:1px;height:50px;background:#777"></div>
</div>
</body></html>
